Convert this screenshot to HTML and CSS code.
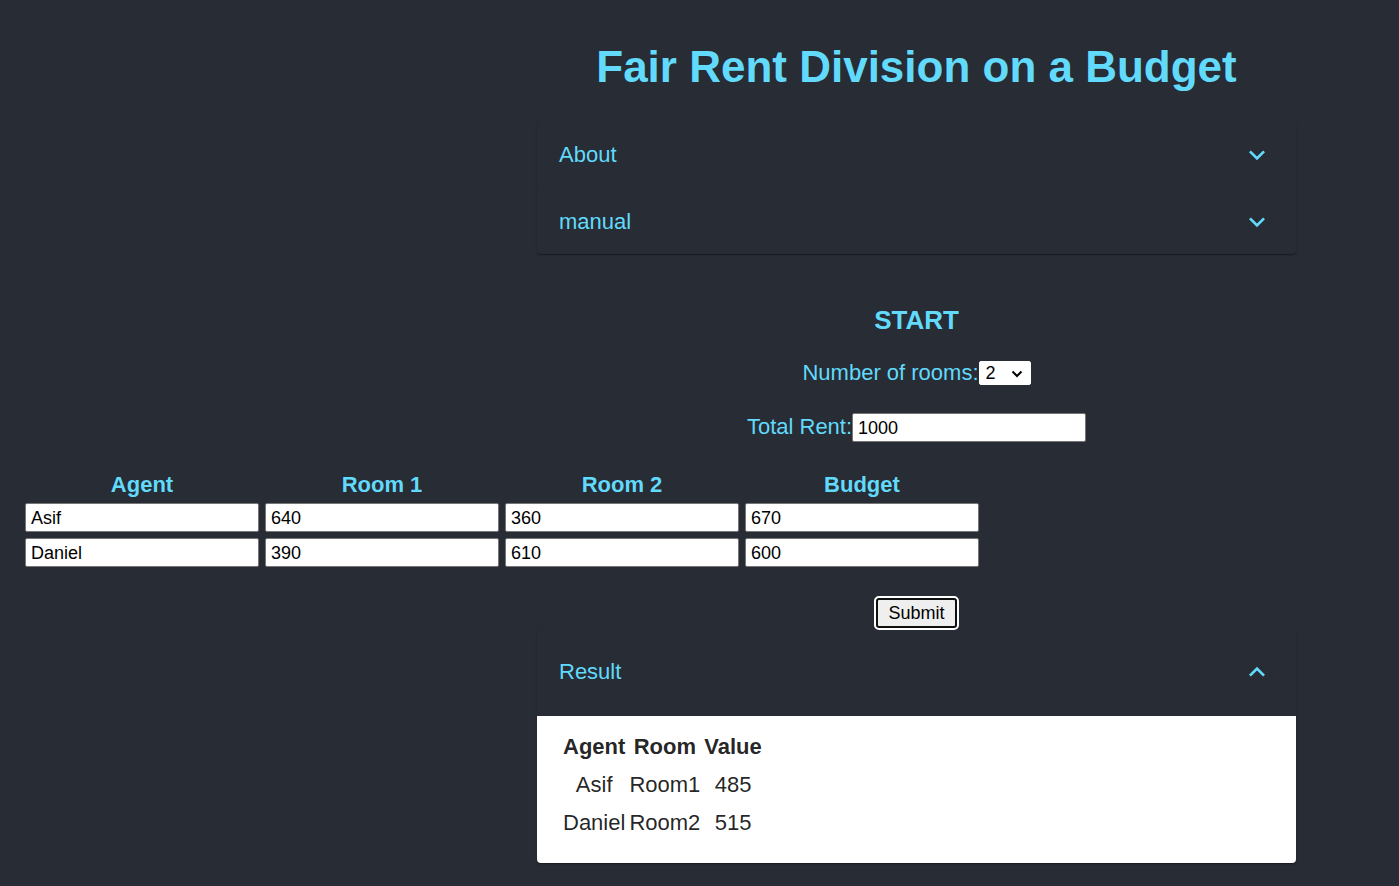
FILE: index.html
```html
<!DOCTYPE html>
<html lang="en">
<head>
<meta charset="utf-8">
<title>Fair Rent Division on a Budget</title>
<link rel="stylesheet" href="styles.css">
</head>
<body>
<div class="app">
  <div class="column">
    <h1 class="title">Fair Rent Division on a Budget</h1>
    <div class="accordion">
      <div class="acc-row">
        <span class="acc-label">About</span>
        <svg class="chev" viewBox="0 0 24 24" width="32" height="32"><path d="M16.59 8.59 12 13.17 7.41 8.59 6 10l6 6 6-6z"/></svg>
      </div>
      <div class="acc-row acc-divider">
        <span class="acc-label">manual</span>
        <svg class="chev" viewBox="0 0 24 24" width="32" height="32"><path d="M16.59 8.59 12 13.17 7.41 8.59 6 10l6 6 6-6z"/></svg>
      </div>
    </div>
    <h3 class="start">START</h3>
    <div class="field-row rooms-row">
      <span class="field-label">Number of rooms:</span>
      <span class="select-wrap">
        <select class="rooms-select"><option>2</option></select>
        <svg class="select-chev" viewBox="0 0 12 8" width="12" height="8"><path d="M1.5 1.5 6 6l4.5-4.5" fill="none" stroke="#000" stroke-width="2"/></svg>
      </span>
    </div>
    <div class="field-row rent-row">
      <span class="field-label">Total Rent:</span>
      <input class="text-input" type="text" value="1000">
    </div>
  </div>

  <div class="agent-grid">
    <div class="col-head">Agent</div>
    <div class="col-head">Room 1</div>
    <div class="col-head">Room 2</div>
    <div class="col-head">Budget</div>
    <input class="text-input" type="text" value="Asif">
    <input class="text-input" type="text" value="640">
    <input class="text-input" type="text" value="360">
    <input class="text-input" type="text" value="670">
    <input class="text-input" type="text" value="Daniel">
    <input class="text-input" type="text" value="390">
    <input class="text-input" type="text" value="610">
    <input class="text-input" type="text" value="600">
  </div>

  <div class="column">
    <div class="submit-row">
      <button class="submit" type="button">Submit</button>
    </div>
    <div class="accordion result">
      <div class="acc-row result-head">
        <span class="acc-label">Result</span>
        <svg class="chev" viewBox="0 0 24 24" width="32" height="32"><path d="m12 8-6 6 1.41 1.41L12 10.83l4.59 4.58L18 14z"/></svg>
      </div>
      <div class="result-body">
        <table class="result-table">
          <thead>
            <tr><th>Agent</th><th>Room</th><th>Value</th></tr>
          </thead>
          <tbody>
            <tr><td>Asif</td><td>Room1</td><td>485</td></tr>
            <tr><td>Daniel</td><td>Room2</td><td>515</td></tr>
          </tbody>
        </table>
      </div>
    </div>
  </div>
</div>
</body>
</html>
```

FILE: styles.css
```css
html, body {
  margin: 0;
  padding: 0;
  background: #282c34;
}

body {
  font-family: "Liberation Sans", Arial, sans-serif;
  color: #61dafb;
  min-height: 886px;
}

.app {
  padding-bottom: 23px;
}

.column {
  width: 759px;
  margin-left: 537px;
}

.title {
  margin: 42px 0 0;
  font-size: 44px;
  line-height: 50px;
  font-weight: bold;
  text-align: center;
}

.accordion {
  margin-top: 30px;
  background: #282c34;
  border-radius: 4px;
  box-shadow: 0 2px 1px -1px rgba(0,0,0,0.2), 0 1px 1px 0 rgba(0,0,0,0.14), 0 1px 3px 0 rgba(0,0,0,0.12);
}

.acc-row {
  height: 66px;
  display: flex;
  align-items: center;
  justify-content: space-between;
  padding: 0 23px 0 22px;
  box-sizing: border-box;
}

.acc-divider {
  border-top: 1px solid rgba(0,0,0,0.04);
}

.acc-label {
  font-size: 22px;
  line-height: 26px;
}

.chev {
  fill: #61dafb;
  display: block;
}

.start {
  margin: 51px 0 0;
  font-size: 26px;
  line-height: 30px;
  font-weight: bold;
  text-align: center;
}

.field-row {
  display: flex;
  justify-content: center;
  align-items: center;
}

.rooms-row {
  margin-top: 25px;
  height: 25px;
}

.rent-row {
  margin-top: 28px;
  height: 29px;
}

.field-label {
  font-size: 22px;
  line-height: 25px;
}

.rent-row .field-label {
  position: relative;
  top: -1px;
}

.select-wrap {
  position: relative;
  display: inline-block;
  width: 52px;
  height: 24px;
}

.rooms-select {
  -webkit-appearance: none;
  appearance: none;
  width: 52px;
  height: 24px;
  box-sizing: border-box;
  border: 1px solid #fff;
  border-radius: 2px;
  background: #fff;
  color: #000;
  font-family: "Liberation Sans", Arial, sans-serif;
  font-size: 18px;
  padding: 0 0 0 6px;
  margin: 0;
  display: block;
}

.select-chev {
  position: absolute;
  right: 8px;
  top: 9px;
  pointer-events: none;
}

.text-input {
  width: 234px;
  height: 29px;
  box-sizing: border-box;
  border: 1px solid #767676;
  border-radius: 2px;
  background: #fff;
  color: #000;
  font-family: "Liberation Sans", Arial, sans-serif;
  font-size: 18px;
  padding: 2px 5px 0;
  margin: 0;
}

.agent-grid {
  margin: 30px 0 0 25px;
  display: grid;
  grid-template-columns: repeat(4, 234px);
  column-gap: 6px;
  row-gap: 6px;
}

.col-head {
  font-size: 22px;
  line-height: 25px;
  font-weight: bold;
  text-align: center;
}

.submit-row {
  margin-top: 31px;
  display: flex;
  justify-content: center;
}

.submit {
  font-family: "Liberation Sans", Arial, sans-serif;
  font-size: 18px;
  line-height: 22px;
  color: #000;
  background: #efefef;
  border: 2px solid #101010;
  border-radius: 3px;
  padding: 2px 10px;
  outline: 2px solid #fff;
  outline-offset: 0;
  height: 30px;
  box-sizing: border-box;
}

.result {
  margin-top: 0;
}

.result-head {
  height: 88px;
}

.result-body {
  background: #fff;
  border-radius: 0 0 4px 4px;
  padding: 11px 23px 20px;
}

.result-table {
  border-spacing: 2px;
  color: rgba(0,0,0,0.87);
  font-size: 22px;
}

.result-table th,
.result-table td {
  padding: 5px 1px;
  line-height: 26px;
  text-align: center;
}

.result-table th {
  font-weight: bold;
}
```
